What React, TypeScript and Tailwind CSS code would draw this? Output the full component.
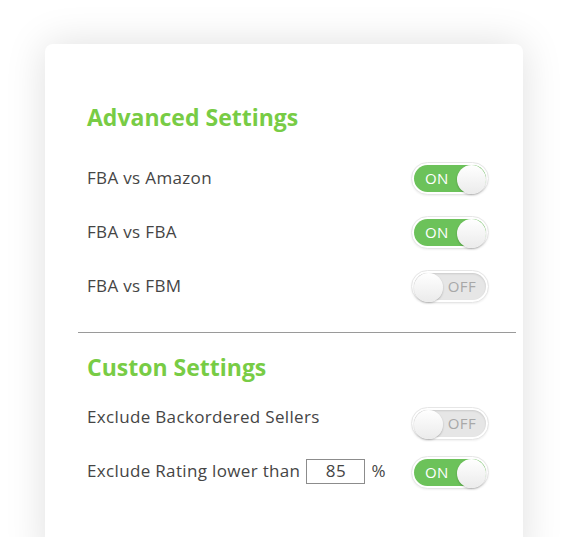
import { useState } from "react";

const Toggle = ({ on, onClick }: { on: boolean; onClick: () => void }) => {
    return (
        <button
            type="button"
            onClick={onClick}
            className="w-[78px] h-[33px] p-[2px] rounded-full bg-white border border-[#e6e6e6] shadow-[0_1px_2px_rgba(0,0,0,0.06)]"
        >
            <div
                className={
                    on
                        ? "relative flex items-center w-full h-full rounded-full bg-[#6cc25a]"
                        : "relative flex items-center w-full h-full rounded-full bg-[#e6e6e6] shadow-[inset_0_1px_2px_rgba(0,0,0,0.12)]"
                }
            >
                {on ? (
                    <>
                        <span className="pl-[11px] text-[15px] text-white">ON</span>
                        <span className="absolute right-0 top-0 w-[29px] h-[29px] rounded-full bg-gradient-to-b from-white to-[#ebebeb] shadow-[0_1px_2px_rgba(0,0,0,0.25)]" />
                    </>
                ) : (
                    <>
                        <span className="absolute left-0 top-0 w-[29px] h-[29px] rounded-full bg-gradient-to-b from-white to-[#ebebeb] shadow-[0_1px_2px_rgba(0,0,0,0.25)]" />
                        <span className="ml-auto pr-[10px] text-[15px] text-[#a8a8a8]">OFF</span>
                    </>
                )}
            </div>
        </button>
    );
};

export default function App() {
    const [toggles, setToggles] = useState({
        amazon: true,
        fba: true,
        fbm: false,
        backorder: false,
        rating: true,
    });
    const [rating, setRating] = useState("85");

    const flip = (key: keyof typeof toggles) =>
        setToggles((t) => ({ ...t, [key]: !t[key] }));

    return (
        <div
            className="w-full h-[537px] overflow-hidden bg-white text-[#454545]"
            style={{ fontFamily: '"Open Sans", "Liberation Sans", sans-serif' }}
        >
            <div className="mt-[44px] ml-[45px] w-[478px] h-[520px] rounded-lg bg-white shadow-[0_0_40px_rgba(0,0,0,0.13)] pt-[58px] pl-[42px] pr-[34px]">
                <h2 className="h-[30px] leading-[30px] text-[23px] font-bold text-[#78cc45]">
                    Advanced Settings
                </h2>
                <div className="mt-[19px] text-[17px] tracking-[0.02em]">
                    <div className="flex items-center justify-between h-[54px]">
                        <span>FBA vs Amazon</span>
                        <Toggle on={toggles.amazon} onClick={() => flip("amazon")} />
                    </div>
                    <div className="flex items-center justify-between h-[54px]">
                        <span>FBA vs FBA</span>
                        <Toggle on={toggles.fba} onClick={() => flip("fba")} />
                    </div>
                    <div className="flex items-center justify-between h-[54px]">
                        <span>FBA vs FBM</span>
                        <Toggle on={toggles.fbm} onClick={() => flip("fbm")} />
                    </div>
                </div>
                <hr className="mt-[19px] ml-[-9px] mr-[-27px] border-t border-[#9a9a9a]" />
                <h2 className="mt-[19px] h-[30px] leading-[30px] text-[23px] font-bold text-[#78cc45]">
                    Custon Settings
                </h2>
                <div className="mt-[8px] text-[17px] tracking-[0.02em]">
                    <div className="flex items-center justify-between h-[54px]">
                        <span className="-mt-[1px]">Exclude Backordered Sellers</span>
                        <div className="mt-[12px]">
                            <Toggle on={toggles.backorder} onClick={() => flip("backorder")} />
                        </div>
                    </div>
                    <div className="flex items-center justify-between h-[54px]">
                        <div className="flex items-center">
                            <span>Exclude Rating lower than</span>
                            <input
                                value={rating}
                                onChange={(e) => setRating(e.target.value)}
                                className="ml-[6px] w-[59px] h-[25px] border border-[#8c8c8c] text-center text-[17px] outline-none"
                            />
                            <span className="ml-[6px]">%</span>
                        </div>
                        <div className="mt-[2px]">
                            <Toggle on={toggles.rating} onClick={() => flip("rating")} />
                        </div>
                    </div>
                </div>
            </div>
        </div>
    );
}
